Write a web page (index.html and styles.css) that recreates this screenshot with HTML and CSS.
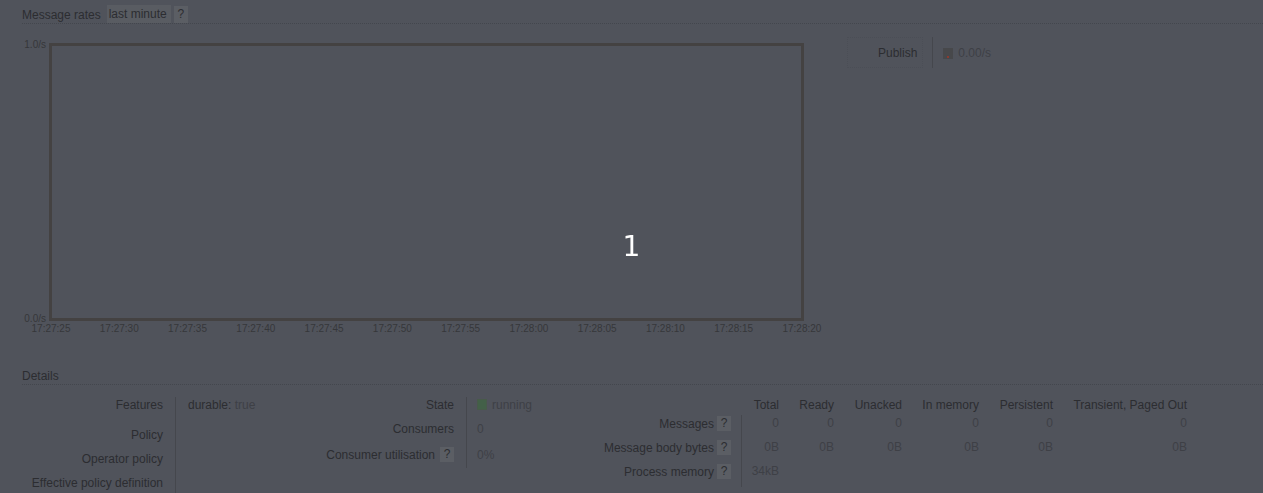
FILE: index.html
```html
<!DOCTYPE html>
<html lang="en">
<head>
<meta charset="utf-8">
<title>Queue</title>
<link rel="stylesheet" href="styles.css">
</head>
<body>
<div class="page">
  <section class="section">
    <h2 class="h2">Message rates <span class="tag">last minute</span><span class="help">?</span></h2>
    <div class="rates">
      <div class="chart">
        <div class="yaxis"><span>1.0/s</span><span>0.0/s</span></div>
        <div class="plot"></div>
        <div class="xaxis">
          <span class="tick"><span>17:27:25</span></span>
          <span class="tick"><span>17:27:30</span></span>
          <span class="tick"><span>17:27:35</span></span>
          <span class="tick"><span>17:27:40</span></span>
          <span class="tick"><span>17:27:45</span></span>
          <span class="tick"><span>17:27:50</span></span>
          <span class="tick"><span>17:27:55</span></span>
          <span class="tick"><span>17:28:00</span></span>
          <span class="tick"><span>17:28:05</span></span>
          <span class="tick"><span>17:28:10</span></span>
          <span class="tick"><span>17:28:15</span></span>
          <span class="tick"><span>17:28:20</span></span>
        </div>
      </div>
      <div class="legend">
        <div class="lg-label">Publish</div>
        <div class="lg-value"><span class="swatch"></span>0.00/s</div>
      </div>
    </div>
  </section>

  <section class="section details">
    <h2 class="h2">Details</h2>
    <div class="tables">
      <div class="kv kv1">
        <div class="k first">Features</div>
        <div class="v first"><span class="dk">durable:</span> true</div>
        <div class="k">Policy</div>
        <div class="v"></div>
        <div class="k">Operator policy</div>
        <div class="v"></div>
        <div class="k">Effective policy definition</div>
        <div class="v"></div>
      </div>

      <div class="kv kv2">
        <div class="k">State</div>
        <div class="v"><span class="run"></span>running</div>
        <div class="k">Consumers</div>
        <div class="v">0</div>
        <div class="k last">Consumer utilisation <span class="help">?</span></div>
        <div class="v last">0%</div>
      </div>

      <div class="kv kv3">
        <div class="th"></div>
        <div class="th">Total</div>
        <div class="th">Ready</div>
        <div class="th">Unacked</div>
        <div class="th">In memory</div>
        <div class="th">Persistent</div>
        <div class="th">Transient, Paged Out</div>

        <div class="k">Messages <span class="help">?</span></div>
        <div class="n line">0</div>
        <div class="n">0</div>
        <div class="n">0</div>
        <div class="n">0</div>
        <div class="n">0</div>
        <div class="n">0</div>

        <div class="k">Message body bytes <span class="help">?</span></div>
        <div class="n line">0B</div>
        <div class="n">0B</div>
        <div class="n">0B</div>
        <div class="n">0B</div>
        <div class="n">0B</div>
        <div class="n">0B</div>

        <div class="k">Process memory <span class="help">?</span></div>
        <div class="n line">34kB</div>
        <div class="n"></div>
        <div class="n"></div>
        <div class="n"></div>
        <div class="n"></div>
        <div class="n"></div>
      </div>
    </div>
  </section>
</div>
<div class="overlay"><span class="count">1</span></div>
</body>
</html>
```
FILE: styles.css
```css
html, body {
  margin: 0;
  padding: 0;
  height: 100%;
  overflow: hidden;
}
body {
  background: #50535b;
  font-family: "Liberation Sans", Arial, sans-serif;
  font-size: 12px;
  color: #2c2d31;
}
.section {
  padding-left: 22px;
}
.h2 {
  margin: 0;
  font-size: 12px;
  font-weight: normal;
  line-height: 14px;
  padding: 7px 0 1px 0;
  border-bottom: 1px dotted #43464d;
  display: flex;
  align-items: center;
  color: #2c2d31;
}
.tag {
  margin-left: 6px;
  padding: 2px 4px 2px 2px;
  margin-top: -2px;
  margin-bottom: -1px;
  background: #595c62;
}
.help {
  display: inline-block;
  width: 14px;
  height: 15px;
  line-height: 15px;
  text-align: center;
  background: #5b5e64;
  color: #2c2d31;
}
.h2 .help {
  margin-left: 3px;
  margin-top: -2px;
  margin-bottom: -1px;
  height: 17px;
  line-height: 17px;
}
.rates {
  display: flex;
  align-items: flex-start;
  margin-top: 19px;
}
.chart {
  display: grid;
  grid-template-columns: 27px 755px;
  grid-template-rows: 278px auto;
}
.yaxis {
  display: flex;
  flex-direction: column;
  justify-content: space-between;
  align-items: flex-end;
  margin: -4px 0;
  padding-right: 3px;
  font-size: 10px;
  line-height: 12px;
  color: #36373a;
}
.plot {
  border: 3px solid #444242;
}
.xaxis {
  grid-column: 2;
  display: flex;
  justify-content: space-between;
  padding: 0 2px;
  margin-top: 2px;
  font-size: 10px;
  line-height: 12px;
  color: #36373a;
}
.tick {
  width: 0;
  display: flex;
  justify-content: center;
  white-space: nowrap;
}
.legend {
  display: flex;
  margin-left: 43px;
  margin-top: -6px;
}
.lg-label {
  padding: 8px 5px 7px 30px;
  line-height: 14px;
  border: 1px dotted rgba(0,0,0,0.05);
  color: #2c2d31;
}
.lg-value {
  margin-left: 9px;
  border-left: 1px solid #45474d;
  padding: 8px 0 8px 10px;
  line-height: 14px;
  height: 15px;
  display: flex;
  align-items: center;
  color: #3e4046;
}
.swatch {
  width: 10px;
  height: 11px;
  margin-right: 5px;
  margin-top: 2px;
  background: #47484b;
  position: relative;
}
.swatch::after {
  content: "";
  position: absolute;
  left: 4px;
  bottom: 1px;
  width: 2px;
  height: 2px;
  background: #8a3a30;
}
.details {
  margin-top: 27px;
}
.tables {
  display: flex;
  margin-top: 11px;
  line-height: 14px;
}
.kv {
  display: grid;
  align-content: start;
}
.kv1 {
  padding-top: 1px;
  grid-template-columns: 153px 100px;
}
.kv2 {
  padding-top: 1px;
  margin-left: 25px;
  grid-template-columns: 166px 114px;
}
.kv3 {
  grid-template-columns: 161px 38px 55px 68px 77px 74px 134px;
}
.k {
  text-align: right;
  padding: 0 12px 10px 0;
  color: #2c2d31;
  white-space: nowrap;
}
.v {
  border-left: 1px solid #45474d;
  padding: 0 0 10px 12px;
  color: #3e4046;
  white-space: nowrap;
}
.kv1 .k.first, .kv1 .v.first {
  padding-bottom: 16px;
}
.kv1 .k.first, .kv1 .v.first, .kv2 .k:first-child, .kv2 .v:nth-child(2) {
  padding-top: 1px;
}
.kv2 .v {
  padding-left: 10px;
  display: flex;
  align-items: flex-start;
}
.kv2 .k.last, .kv2 .v.last {
  padding-bottom: 6px;
}
.kv2 .k.last {
  display: flex;
  justify-content: flex-end;
  align-items: center;
  gap: 5px;
  height: 15px;
  padding-top: 1px;
}
.kv2 .v.last {
  height: 15px;
  display: flex;
  align-items: center;
  padding-top: 1px;
}
.dk {
  color: #2c2d31;
}
.run {
  width: 10px;
  height: 11px;
  margin: 1px 5px 0 0;
  background: #436048;
  box-shadow: inset 0 0 0 1px #485a4a;
}
.th {
  text-align: right;
  padding-top: 2px;
  padding-bottom: 3px;
  color: #2c2d31;
  white-space: nowrap;
}
.kv3 .k {
  padding: 1px 10px 8px 0;
  display: flex;
  justify-content: flex-end;
  align-items: center;
  gap: 3px;
  height: 15px;
}
.n {
  text-align: right;
  padding: 1px 0 8px 0;
  height: 15px;
  line-height: 15px;
  color: #3e4046;
}
.n.line {
  border-left: 1px solid #45474d;
}
.overlay {
  position: fixed;
  inset: 0;
  display: flex;
  align-items: center;
  justify-content: center;
  pointer-events: none;
}
.count {
  font-family: "DejaVu Sans", sans-serif;
  font-size: 28px;
  color: #ffffff;
  line-height: 1;
}
```
